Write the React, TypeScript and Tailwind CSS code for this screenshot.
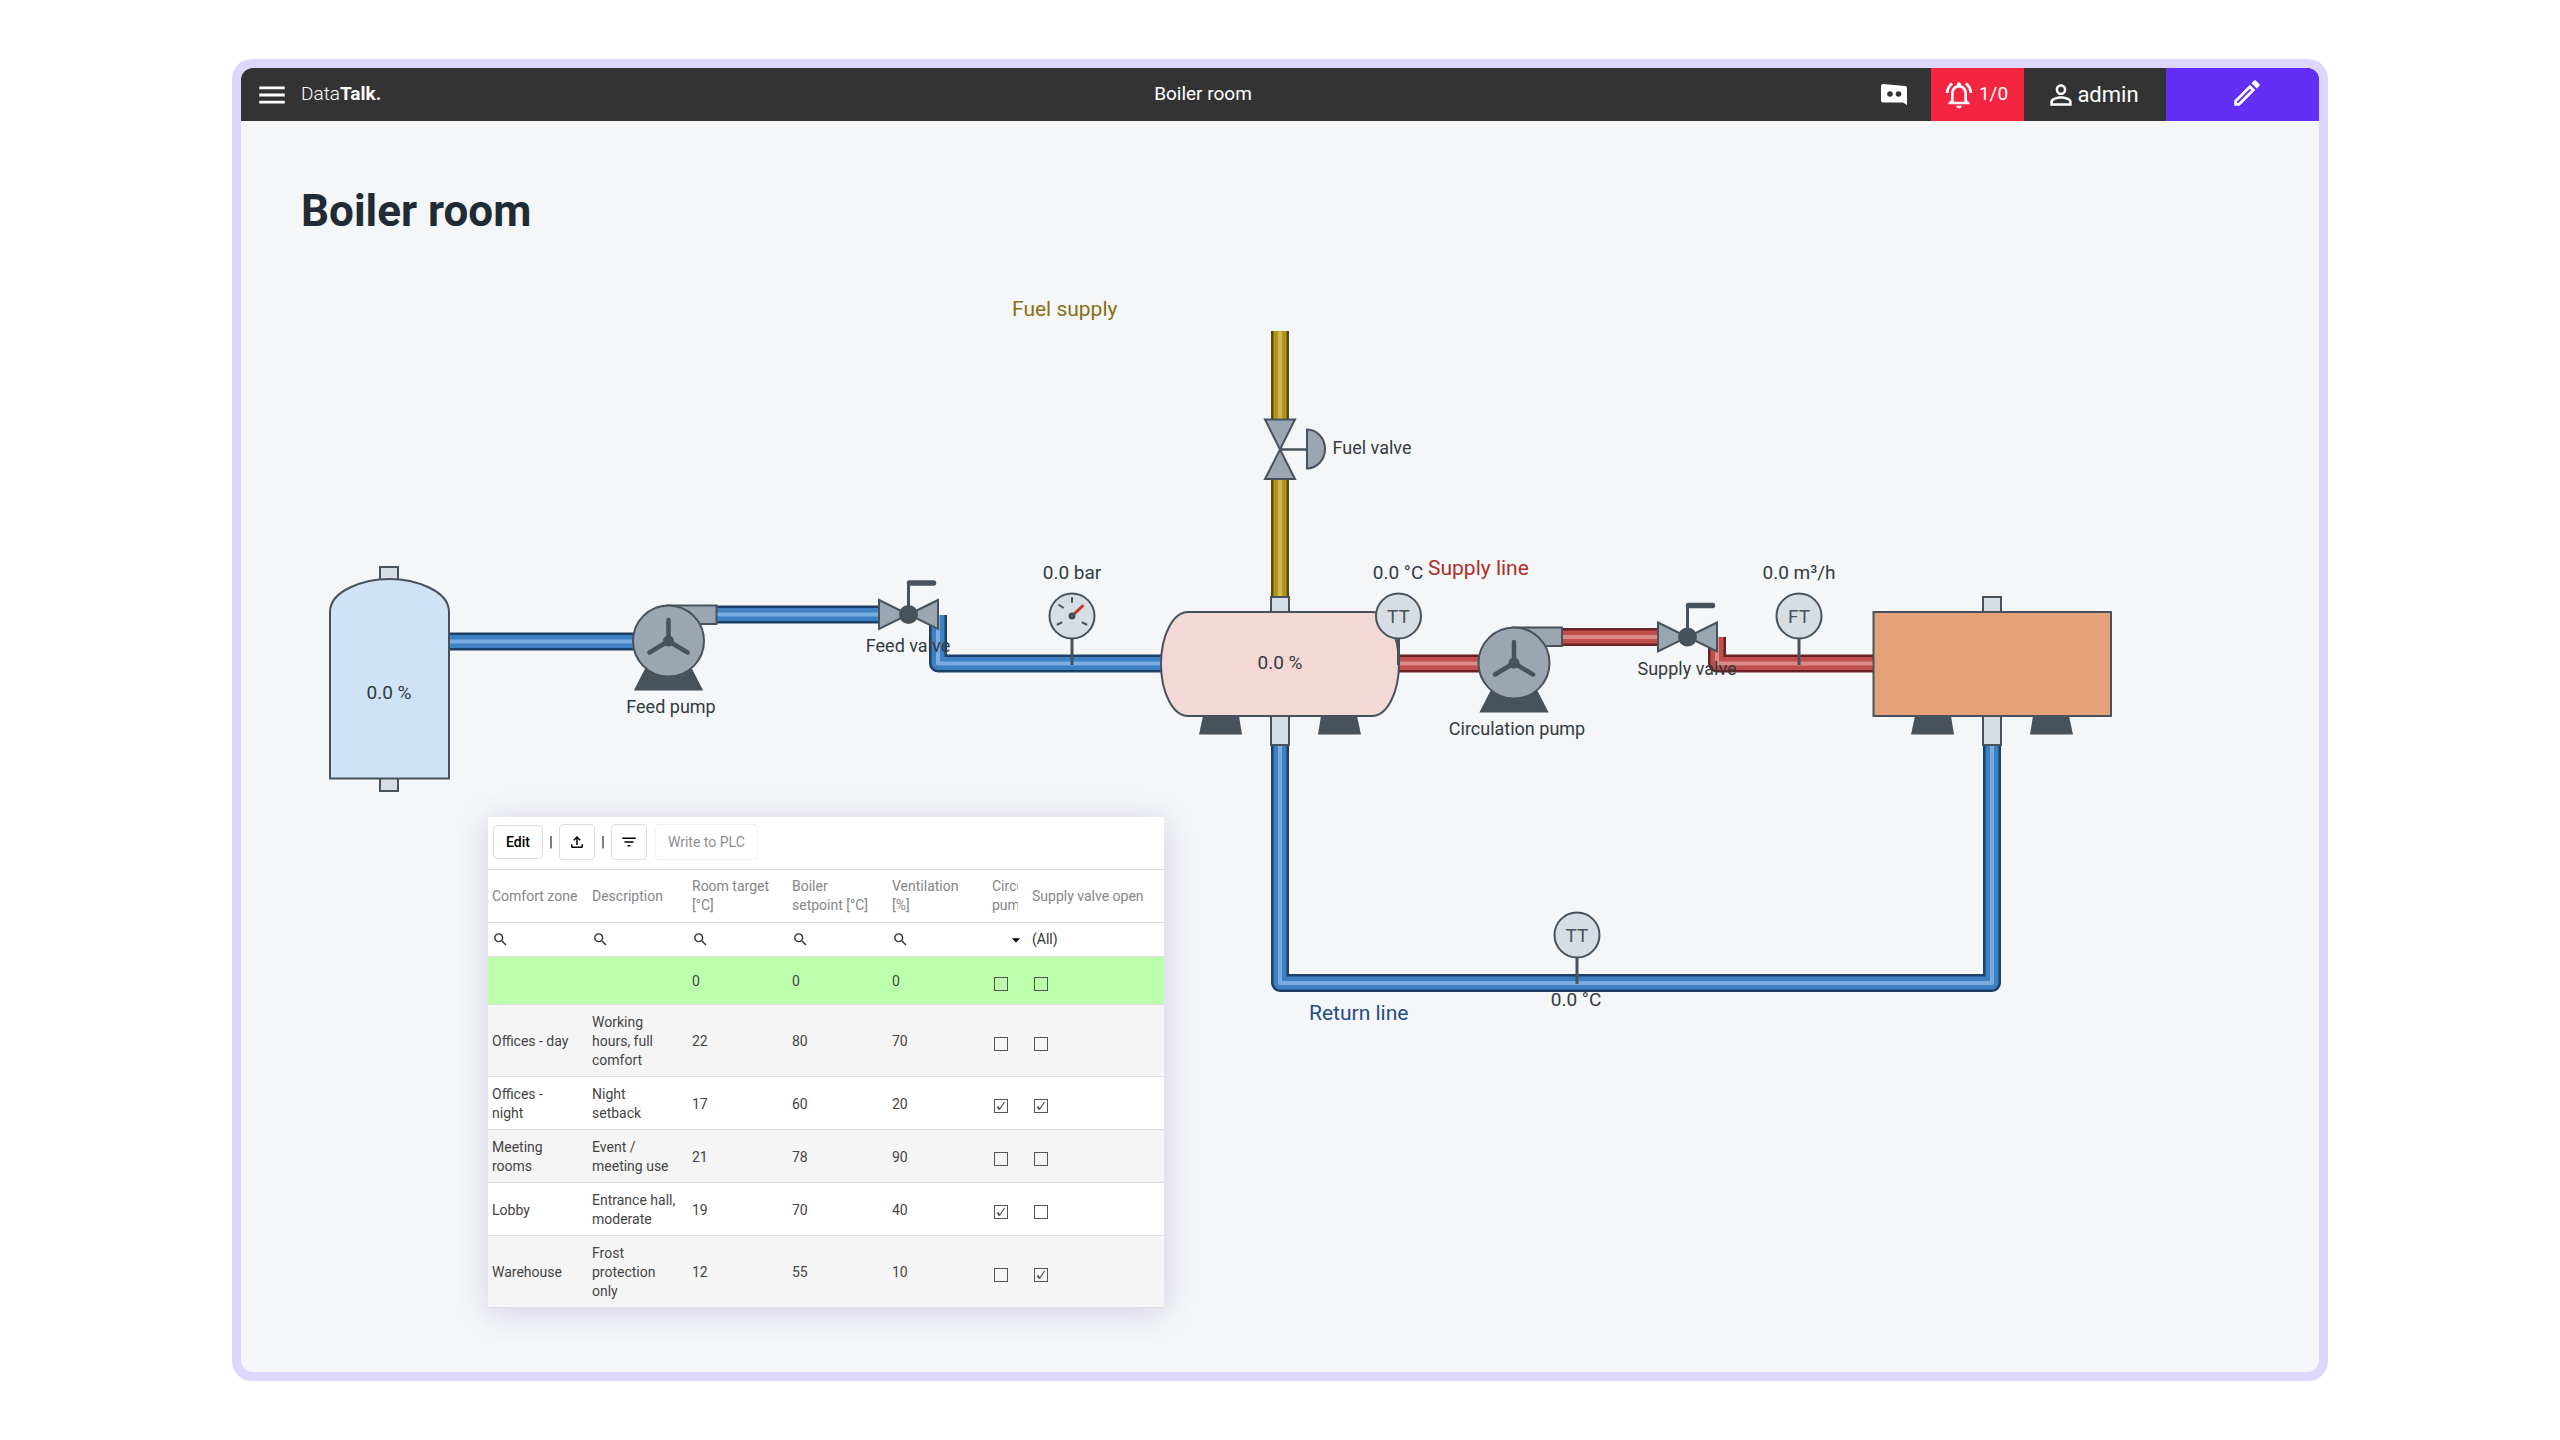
import { useState } from "react";
import {
  MdArrowDropDown,
  MdFilterList,
  MdMenu,
  MdOutlineEdit,
  MdOutlineFileUpload,
  MdOutlineNotificationsActive,
  MdPersonOutline,
  MdSearch,
} from "react-icons/md";

type Row = {
  zone: string;
  description: string;
  room: number;
  boiler: number;
  ventilation: number;
  pump: boolean;
  valve: boolean;
};

const initialRows: Row[] = [
  { zone: "", description: "", room: 0, boiler: 0, ventilation: 0, pump: false, valve: false },
  { zone: "Offices - day", description: "Working hours, full comfort", room: 22, boiler: 80, ventilation: 70, pump: false, valve: false },
  { zone: "Offices - night", description: "Night setback", room: 17, boiler: 60, ventilation: 20, pump: true, valve: true },
  { zone: "Meeting rooms", description: "Event / meeting use", room: 21, boiler: 78, ventilation: 90, pump: false, valve: false },
  { zone: "Lobby", description: "Entrance hall, moderate", room: 19, boiler: 70, ventilation: 40, pump: true, valve: false },
  { zone: "Warehouse", description: "Frost protection only", room: 12, boiler: 55, ventilation: 10, pump: false, valve: true },
];

const textColumns = ["Comfort zone", "Description", "Room target [°C]", "Boiler setpoint [°C]", "Ventilation [%]"];

const STEEL = "#47525d";
const BODY = "#9aa6b2";
const LIGHT = "#d6dde3";

const pipeColors = {
  water: { edge: "#1d4166", body: "#3e81c3", shine: "#7bacdf" },
  hot: { edge: "#6b2224", body: "#c04e4d", shine: "#dc8a86" },
  fuel: { edge: "#5a4a10", body: "#b39616", shine: "#cdb65c" },
};

function Pipe({ d, kind }: { d: string; kind: keyof typeof pipeColors }) {
  const c = pipeColors[kind];
  return (
    <g fill="none" strokeLinejoin="round">
      <path d={d} stroke={c.edge} strokeWidth={18} />
      <path d={d} stroke={c.body} strokeWidth={13} />
      <path d={d} stroke={c.shine} strokeWidth={4} />
    </g>
  );
}

function Pump({ x, y }: { x: number; y: number }) {
  return (
    <g transform={`translate(${x} ${y})`} stroke={STEEL} strokeWidth={2}>
      <path d="M-22 27 L-33 48.5 H33 L22 27 Z" fill={STEEL} />
      <path d="M0 -35.5 H48 V-17 H20 Z" fill={BODY} />
      <circle r={35.5} fill={BODY} />
      <path d="M0 0 V-21 M0 0 L-19 11.5 M0 0 L19 11.5" strokeWidth={4.5} strokeLinecap="round" />
      <circle r={4.5} fill={STEEL} />
    </g>
  );
}

function HandValve({ x, y }: { x: number; y: number }) {
  return (
    <g transform={`translate(${x} ${y})`} stroke={STEEL} strokeWidth={2}>
      <path d="M-29.5 -14.5 L0 0 L-29.5 14.5 Z M29.5 -14.5 L0 0 L29.5 14.5 Z" fill={BODY} />
      <path d="M0 0 V-31" strokeWidth={3} />
      <path d="M1 -31.5 H25" strokeWidth={5.5} strokeLinecap="round" />
      <circle r={8.5} fill={STEEL} />
    </g>
  );
}

function Sensor({ x, y, tag }: { x: number; y: number; tag?: string }) {
  return (
    <g transform={`translate(${x} ${y})`} stroke={STEEL} strokeWidth={2}>
      <path d="M0 22 V49" strokeWidth={3} />
      <circle r={22.5} fill={LIGHT} />
      {tag ? (
        <text y={7} textAnchor="middle" fill={STEEL} stroke="none" className="text-[19px]">
          {tag}
        </text>
      ) : (
        <>
          <path d="M0 -18 V-14 M-13 -11 L-9 -8.5 M-14.5 8.5 L-10.5 6.5 M14.5 8.5 L10.5 6.5" strokeLinecap="round" />
          <path d="M0 0 L10.5 -10" stroke="#c0392b" strokeWidth={3} strokeLinecap="round" />
          <circle r={2.5} fill={STEEL} />
        </>
      )}
    </g>
  );
}

function Nozzle({ x, y, h }: { x: number; y: number; h: number }) {
  return <rect x={x - 9} y={y} width={18} height={h} fill={LIGHT} stroke={STEEL} strokeWidth={2} />;
}

function Feet({ x, y }: { x: number; y: number }) {
  return (
    <g transform={`translate(${x} ${y})`} fill={STEEL}>
      <path d="M-77 0 H-41 L-38 18.5 H-81 Z" />
      <path d="M41 0 H77 L81 18.5 H38 Z" />
    </g>
  );
}

function Diagram() {
  return (
    <svg viewBox="241 121 2078 1251" className="absolute inset-0 size-full" role="img" aria-label="Boiler room diagram">
      {/* pipes */}
      <Pipe kind="water" d="M449 641.5 H636" />
      <Pipe kind="water" d="M716 614.5 H880" />
      <Pipe kind="water" d="M938 615 V663.5 H1162" />
      <Pipe kind="fuel" d="M1280 331 V420" />
      <Pipe kind="fuel" d="M1280 479 V597" />
      <Pipe kind="hot" d="M1398 663.5 H1482" />
      <Pipe kind="hot" d="M1561 637 H1660" />
      <Pipe kind="hot" d="M1717 637 V663.5 H1874" />
      <Pipe kind="water" d="M1280 745 V983 H1992 V745" />

      {/* feed tank */}
      <Nozzle x={389} y={567} h={14} />
      <Nozzle x={389} y={778} h={13} />
      <path d="M330 778.5 V612 C330 590 365 579 389.5 579 C414 579 449 590 449 612 V778.5 Z" fill="#cfe2f6" stroke={STEEL} strokeWidth={2} />

      {/* boiler */}
      <Nozzle x={1280} y={597} h={16} />
      <Nozzle x={1280} y={715} h={30} />
      <Feet x={1280} y={716} />
      <path d="M1188 612 H1372 A27 52 0 0 1 1372 716 H1188 A27 52 0 0 1 1188 612 Z" fill="#f3d8d6" stroke={STEEL} strokeWidth={2} />

      {/* heat consumer */}
      <Nozzle x={1992} y={597} h={16} />
      <Nozzle x={1992} y={715} h={30} />
      <Feet x={1992} y={716} />
      <rect x={1873.5} y={612} width={237.5} height={104} fill="#e5a177" stroke={STEEL} strokeWidth={2} />

      <Pump x={668.5} y={641} />
      <Pump x={1514} y={663} />
      <HandValve x={908.5} y={614.5} />
      <HandValve x={1687.5} y={637} />

      {/* fuel valve */}
      <g stroke={STEEL} strokeWidth={2} fill={BODY}>
        <path d="M1265 419.5 H1295 L1280 449.5 Z M1265 479 H1295 L1280 449.5 Z" />
        <path d="M1280 449.5 H1307" strokeWidth={2.5} />
        <path d="M1307 429.5 A18 19.5 0 0 1 1307 468.5 Z" />
      </g>

      <Sensor x={1072} y={616} />
      <Sensor x={1398.5} y={616} tag="TT" />
      <Sensor x={1799} y={616} tag="FT" />
      <Sensor x={1577} y={935} tag="TT" />

      {/* values */}
      <g fill="#333a41" textAnchor="middle" className="text-[19px]">
        <text x={389} y={699}>0.0 %</text>
        <text x={1280} y={669}>0.0 %</text>
        <text x={1072} y={579}>0.0 bar</text>
        <text x={1398} y={579}>0.0 °C</text>
        <text x={1799} y={579}>0.0 m³/h</text>
        <text x={1576} y={1006}>0.0 °C</text>
      </g>

      {/* equipment names */}
      <g fill="#333a41" textAnchor="middle" className="text-[18px]">
        <text x={671} y={713}>Feed pump</text>
        <text x={908} y={652}>Feed valve</text>
        <text x={1517} y={735}>Circulation pump</text>
        <text x={1687} y={675}>Supply valve</text>
        <text x={1372} y={454}>Fuel valve</text>
      </g>

      {/* line names */}
      <g className="text-[21px]">
        <text x={1012} y={316} fill="#8a7012">Fuel supply</text>
        <text x={1428} y={575} fill="#ad2f28">Supply line</text>
        <text x={1309} y={1020} fill="#1f4e82">Return line</text>
      </g>
    </svg>
  );
}

function TickBox({ checked, label, onChange }: { checked: boolean; label: string; onChange: () => void }) {
  return (
    <span className="relative mt-1 ml-0.5 block size-3.5">
      <input
        type="checkbox"
        aria-label={label}
        checked={checked}
        onChange={onChange}
        className="block size-3.5 appearance-none border border-[#555]"
      />
      {checked && (
        <svg viewBox="0 0 14 14" className="pointer-events-none absolute inset-0 size-3.5" fill="none" stroke="#444">
          <path d="M3.5 7.5 L5.5 10.5" strokeWidth={1.8} />
          <path d="M5.5 10.5 L10.5 3" strokeWidth={1.1} />
        </svg>
      )}
    </span>
  );
}

function ZoneTable() {
  const [rows, setRows] = useState(initialRows);

  const toggle = (index: number, key: "pump" | "valve") =>
    setRows(rows.map((row, i) => (i === index ? { ...row, [key]: !row[key] } : row)));

  return (
    <section className="absolute top-174 left-[247px] w-169 bg-white text-sm leading-[19px] text-[#444] shadow-[0_4px_28px_rgba(110,80,170,0.24)]">
      <div className="flex h-[53px] items-center border-b border-[#ddd] px-[5px] pb-0.5 text-black">
        <button className="h-[34px] rounded-sm border border-[#ddd] px-3 font-medium">Edit</button>
        <span className="w-4 text-center">|</span>
        <button aria-label="Export" className="flex h-9 w-9 items-center justify-center rounded-sm border border-[#ddd]">
          <MdOutlineFileUpload className="size-[18px]" />
        </button>
        <span className="w-4 text-center">|</span>
        <button aria-label="Filter" className="flex h-9 w-9 items-center justify-center rounded-sm border border-[#ddd]">
          <MdFilterList className="size-[18px]" />
        </button>
        <button disabled className="ml-2 h-9 rounded-sm border border-[#f0f0f0] px-3 text-[#8f8f8f]">
          Write to PLC
        </button>
      </div>

      <table className="w-full table-fixed border-separate border-spacing-0 text-left">
        <colgroup>
          {textColumns.map((name) => (
            <col key={name} className="w-[100px]" />
          ))}
          <col className="w-10" />
          <col />
        </colgroup>
        <thead className="text-[#868686]">
          <tr className="h-[53px]">
            {textColumns.map((name) => (
              <th key={name} className="border-b border-[#ddd] pr-2.5 pl-1 font-normal">
                {name}
              </th>
            ))}
            <th className="border-b border-[#ddd] pr-2.5 pl-1 font-normal">
              <div className="overflow-hidden">Circulation pump</div>
            </th>
            <th className="border-b border-[#ddd] px-1 font-normal">Supply valve open</th>
          </tr>
          <tr className="h-[34px] text-[#333]">
            {textColumns.map((name) => (
              <td key={name} className="border-b border-[#ddd] px-1">
                <label className="flex items-center">
                  <MdSearch className="size-[17px] shrink-0 stroke-current" />
                  <input aria-label={`Filter ${name}`} className="w-full min-w-0 outline-none" />
                </label>
              </td>
            ))}
            <td className="border-b border-[#ddd]">
              <div className="relative">
                <select aria-label="Filter Circulation pump" className="block h-5 w-full appearance-none text-transparent">
                  <option></option>
                </select>
                <MdArrowDropDown className="pointer-events-none absolute top-0 right-0.5 size-5 text-black" />
              </div>
            </td>
            <td className="border-b border-[#ddd] px-1">
              <select aria-label="Filter Supply valve open" className="block h-5 w-full appearance-none">
                <option>(All)</option>
              </select>
            </td>
          </tr>
        </thead>
        <tbody>
          {rows.map((row, i) => (
            <tr
              key={i}
              className={`h-12 *:border-b *:border-[#ddd] *:pt-2 *:pr-3 *:pb-1.5 *:pl-1 ${
                i === 0 ? "bg-[#bbffac]" : i % 2 ? "bg-[#f5f5f5]" : "bg-white"
              }`}
            >
              <td>{row.zone}</td>
              <td>{row.description}</td>
              <td>{row.room}</td>
              <td>{row.boiler}</td>
              <td>{row.ventilation}</td>
              <td>
                <TickBox checked={row.pump} label={`Circulation pump ${row.zone}`} onChange={() => toggle(i, "pump")} />
              </td>
              <td>
                <TickBox checked={row.valve} label={`Supply valve open ${row.zone}`} onChange={() => toggle(i, "valve")} />
              </td>
            </tr>
          ))}
        </tbody>
      </table>
    </section>
  );
}

function Header() {
  return (
    <header className="flex h-[53px] shrink-0 items-stretch bg-[#333] text-[19px] text-white">
      <div className="flex w-[308px] items-center gap-3 pl-3.5">
        <button aria-label="Menu">
          <MdMenu className="size-[34px]" />
        </button>
        <a href="#" className="font-light">
          Data<b className="font-bold">Talk.</b>
        </a>
      </div>
      <div className="flex flex-1 items-center justify-center">Boiler room</div>
      <button aria-label="Assistant" className="flex w-[74px] items-center justify-center">
        <svg viewBox="0 0 26 21" className="h-[21px] w-[26px]">
          <path d="M2 0 L24 2 Q26 2.2 26 4 V21 L22 18.5 H2 Q0 18.5 0 16.5 V2 Q0 0 2 0 Z" fill="#fff" />
          <circle cx="9" cy="10" r="2.8" fill="#333" />
          <circle cx="17.5" cy="10" r="2.8" fill="#333" />
        </svg>
      </button>
      <button className="flex w-[93px] items-center justify-center gap-1 bg-[#f32541] pr-1">
        <MdOutlineNotificationsActive className="size-8" />
        1/0
      </button>
      <button className="flex w-[142px] items-center justify-center pr-1.5 text-[22px]">
        <MdPersonOutline className="size-8" />
        admin
      </button>
      <button aria-label="Edit page" className="flex w-[153px] items-center justify-center bg-[#632ff4] pb-1 pl-2">
        <MdOutlineEdit className="size-[34px]" />
      </button>
    </header>
  );
}

export default function App() {
  return (
    <div className="flex min-h-screen bg-white px-[232px] py-[59px] font-['Roboto',sans-serif]">
      <div className="flex flex-1 flex-col rounded-[20px] bg-[#dfd6fb] p-[9px]">
        <div className="flex flex-1 flex-col overflow-hidden rounded-xl bg-[#f4f6f8]">
          <Header />
          <main className="relative flex-1">
            <Diagram />
            <h1 className="relative px-15 pt-16 text-[44px] leading-[52px] font-bold text-[#212b36]">Boiler room</h1>
            <ZoneTable />
          </main>
        </div>
      </div>
    </div>
  );
}
